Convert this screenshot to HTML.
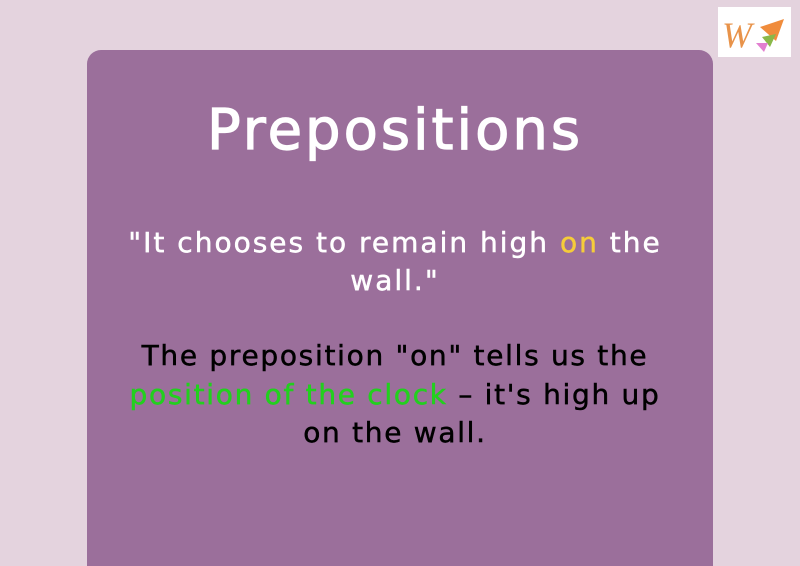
<!DOCTYPE html>
<html><head><style>
html,body{margin:0;width:800px;height:566px;overflow:hidden}
body{background:#e4d3de;position:relative;font-family:"DejaVu Sans","Liberation Sans",sans-serif}
.card{position:absolute;left:87px;top:50px;width:626px;height:516px;background:#9b6f9b;border-radius:14px 14px 0 0}
.t{position:absolute;left:82px;width:626px;text-align:center;white-space:nowrap}
h1{margin:0;font-weight:normal;color:#fff;font-size:56px;line-height:60px;letter-spacing:3px;-webkit-text-stroke:1.2px #fff}
.logo{position:absolute;left:718px;top:7px;width:73px;height:50px;background:#fff}
</style></head><body>
<div class="logo"><svg width="73" height="50">
<text x="4" y="40" font-family="Liberation Serif" font-style="italic" font-size="36" fill="#e8934a">W</text>
<polygon points="42,20 66,12 58,34" fill="#f08c3c"/>
<polygon points="44,30 58,27 52,40" fill="#8ab84a"/>
<polygon points="38,36 50,36 46,45" fill="#e27fd0"/>
</svg></div>
<div class="card"></div>
<div class="t" style="top:101px"><h1>Prepositions</h1></div>
<div class="t" style="top:224px;color:#fff;font-size:28px;line-height:38px;letter-spacing:2px;-webkit-text-stroke:0.5px #fff">"It chooses to remain high <span style="color:#f5cc3a;-webkit-text-stroke:0.5px #f5cc3a">on</span> the<br>wall."</div>
<div class="t" style="top:337px;color:#000;font-size:28px;line-height:38.5px;letter-spacing:1.7px;-webkit-text-stroke:0.5px #000">The preposition "on" tells us the<br><span style="color:#22d01e;-webkit-text-stroke:0.5px #22d01e">position of the clock</span> – it's high up<br>on the wall.</div>
</body></html>
